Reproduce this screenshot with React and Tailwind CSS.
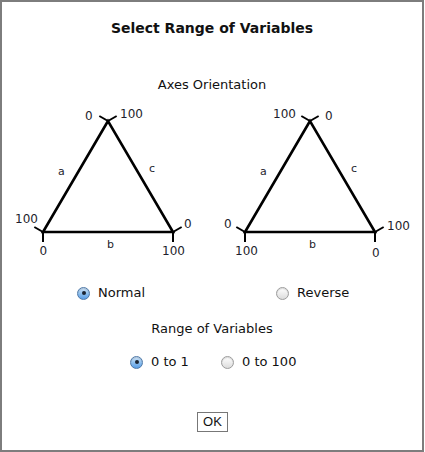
import React, { useState } from 'react';

const TICK = 10;
const dirs = {
  upLeft: [-0.866, -0.5],
  upRight: [0.866, -0.5],
  down: [0, 1],
};

// one ternary triangle with its corner ticks and axis labels
const Triangle = ({ top, left, right, labels }) => {
  const corners = [
    { p: top, ticks: ['upLeft', 'upRight'] },
    { p: left, ticks: ['upLeft', 'down'] },
    { p: right, ticks: ['upRight', 'down'] },
  ];
  return (
    <svg width="210" height="162" className="font-['DejaVu_Sans',sans-serif]">
      <polygon
        points={`${top.join(',')} ${left.join(',')} ${right.join(',')}`}
        fill="none"
        stroke="#000"
        strokeWidth="2.6"
        strokeLinejoin="miter"
      />
      {corners.map((c, i) =>
        c.ticks.map((t) => (
          <line
            key={`${i}-${t}`}
            x1={c.p[0]}
            y1={c.p[1]}
            x2={c.p[0] + dirs[t][0] * TICK}
            y2={c.p[1] + dirs[t][1] * TICK}
            stroke="#000"
            strokeWidth="2"
          />
        ))
      )}
      {labels.map((l, i) => (
        <text key={i} x={l.x} y={l.y} fontSize={l.size || 12} fill="#1e1e2c">
          {l.t}
        </text>
      ))}
    </svg>
  );
};

const Radio = ({ checked, onClick, label }) => (
  <button onClick={onClick} className="flex items-center gap-[8px] cursor-default">
    <span
      className={`w-[13px] h-[13px] rounded-full border flex items-center justify-center shadow-[inset_0_1px_1px_rgba(0,0,0,0.15)] ${
        checked
          ? 'border-[#4f79a8] bg-gradient-to-b from-[#d4e8fb] via-[#8fc0ee] to-[#5a9ee6]'
          : 'border-[#9c9c9c] bg-gradient-to-b from-[#ffffff] to-[#dcdcdc]'
      }`}
    >
      {checked && <span className="w-[4px] h-[4px] rounded-full bg-[#1b2432]" />}
    </span>
    <span className="text-[13px] leading-[16px] text-[#111]">{label}</span>
  </button>
);

export default function App() {
  const [orientation, setOrientation] = useState('normal');
  const [range, setRange] = useState('1');

  return (
    <div className="w-[424px] h-[452px] bg-white border-2 border-[#7d7d7d] flex flex-col font-['DejaVu_Sans',sans-serif] text-[#111]">
      <h1 className="mt-[18px] text-center text-[14px] leading-[17px] font-bold">Select Range of Variables</h1>
      <p className="mt-[40px] text-center text-[13px] leading-[16px]">Axes Orientation</p>

      <div className="mt-[7px] flex">
        <Triangle
          top={[106, 21]}
          left={[41, 132]}
          right={[171, 132]}
          labels={[
            { t: '0', x: 83, y: 20 },
            { t: '100', x: 118, y: 18 },
            { t: '100', x: 13, y: 123 },
            { t: '0', x: 37.5, y: 155 },
            { t: '0', x: 182, y: 128 },
            { t: '100', x: 160, y: 155 },
            { t: 'a', x: 56, y: 75, size: 11 },
            { t: 'c', x: 147, y: 72, size: 11 },
            { t: 'b', x: 105, y: 148, size: 11 },
          ]}
        />
        <Triangle
          top={[98, 21]}
          left={[33, 132]}
          right={[163, 132]}
          labels={[
            { t: '100', x: 61, y: 18 },
            { t: '0', x: 113, y: 20 },
            { t: '0', x: 12, y: 128 },
            { t: '100', x: 23, y: 155 },
            { t: '100', x: 175, y: 130 },
            { t: '0', x: 160, y: 157 },
            { t: 'a', x: 48, y: 75, size: 11 },
            { t: 'c', x: 139, y: 72, size: 11 },
            { t: 'b', x: 97, y: 148, size: 11 },
          ]}
        />
      </div>

      <div className="mt-[23px] pl-[75px] flex">
        <div className="w-[199px] flex">
          <Radio checked={orientation === 'normal'} onClick={() => setOrientation('normal')} label="Normal" />
        </div>
        <Radio checked={orientation === 'reverse'} onClick={() => setOrientation('reverse')} label="Reverse" />
      </div>

      <p className="mt-[20px] text-center text-[13px] leading-[16px]">Range of Variables</p>

      <div className="mt-[17px] pl-[128px] flex">
        <div className="w-[91px] flex">
          <Radio checked={range === '1'} onClick={() => setRange('1')} label="0 to 1" />
        </div>
        <Radio checked={range === '100'} onClick={() => setRange('100')} label="0 to 100" />
      </div>

      <div className="mt-[42px] flex justify-center">
        <button className="ml-[1px] w-[31px] h-[20px] border border-[#777] bg-white text-[13px] leading-[18px] font-['Liberation_Sans',Arial,sans-serif] text-[#111]">
          OK
        </button>
      </div>
    </div>
  );
}
